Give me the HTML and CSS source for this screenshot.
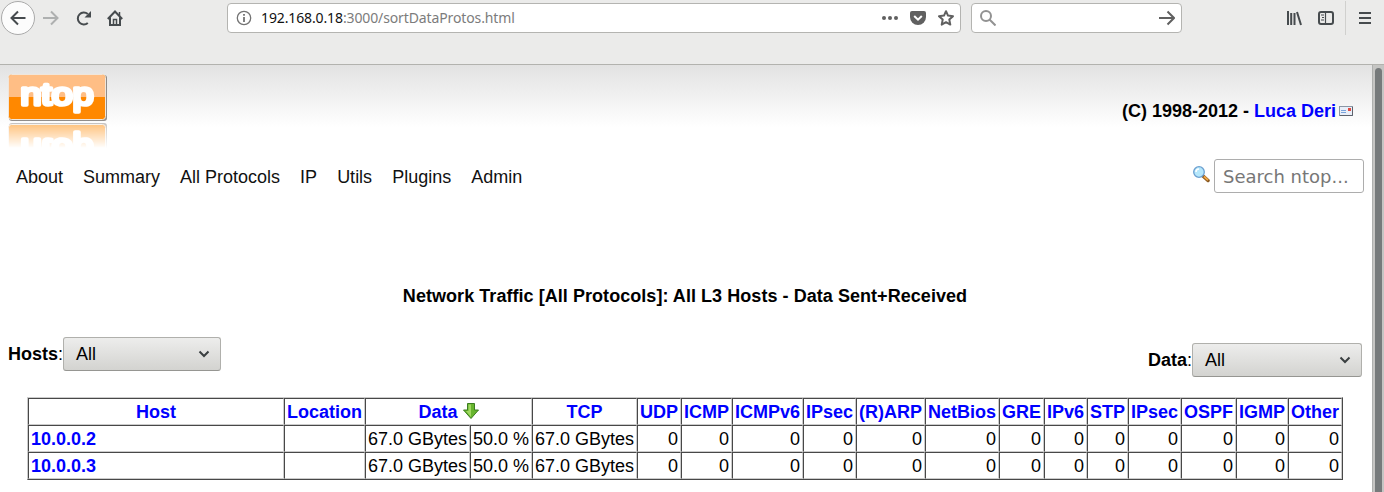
FILE: index.html
```
<!DOCTYPE html>
<html lang="en">
<head>
<meta charset="utf-8">
<title>ntop</title>
<link rel="stylesheet" href="styles.css">
</head>
<body>
<header class="toolbar">
  <div class="nav-buttons">
    <span class="back"><svg width="16" height="16" viewBox="0 0 16 16" class="icon"><path d="M15.500 8H2M8 1.500L1.500 8 8 14.500"/></svg></span>
    <svg width="16" height="16" viewBox="0 0 16 16" class="icon forward"><path d="M0 8h14M8 1.500L14.500 8 8 14.500"/></svg>
    <svg width="16" height="16" viewBox="0 0 16 16" class="icon"><path d="M11.800 13A6 6 0 1 1 11.800 4"/><path class="solid" d="M15 1v6.500H8.500z"/></svg>
    <svg width="16" height="16" viewBox="0 0 16 16" class="icon"><path d="M.8 9L8 1.500 15.200 9M3 7.500V15h10V7.500"/><path d="M6.500 15V9.500h3V15" stroke-width="1.500"/><path d="M12.500 2v4" stroke-width="1.500"/></svg>
  </div>
  <div class="url-bar">
    <svg width="16" height="16" viewBox="0 0 16 16" class="icon info"><circle cx="8" cy="8" r="6.700"/><path stroke-width="1.800" d="M8 7v5M8 4v1.800"/></svg>
    <span class="url"><b>192.168.0.18</b>:3000/sortDataProtos.html</span>
    <svg width="16" height="16" viewBox="0 0 16 16" class="dots"><circle cx="2" cy="8" r="2"/><circle cx="8" cy="8" r="2"/><circle cx="14" cy="8" r="2"/></svg>
    <svg width="16" height="16" viewBox="0 0 16 16" class="pocket"><path d="M2 1h12q2 0 2 2v4a8 8 0 0 1-16 0V3q0-2 2-2z"/><path class="check" d="M4.200 6L8 9.700 11.800 6"/></svg>
    <svg width="16" height="16" viewBox="0 0 16 16" class="icon gray"><path stroke-linejoin="round" d="M8 1.200l2 4.400 5 .6-3.700 3.400 1 5L8 12.200l-4.300 2.400 1-5L1 6.200l5-.6z"/></svg>
  </div>
  <div class="search-bar">
    <svg width="16" height="16" viewBox="0 0 16 16" class="icon lens"><circle cx="6" cy="6" r="5"/><path d="M9.500 9.500l6 6"/></svg>
    <svg width="16" height="16" viewBox="0 0 16 16" class="icon gray"><path d="M0 8h14.500M8.500 1.500L15 8l-6.500 6.500"/></svg>
  </div>
  <div class="tools">
    <svg width="16" height="16" viewBox="0 0 16 16" class="icon"><path d="M2 1v14M5.200 3v12M8.500 3v12M11 2l4 13"/></svg>
    <svg width="16" height="16" viewBox="0 0 16 16" class="icon"><rect x="1" y="2" width="14" height="12" rx="2"/><path stroke-width="1.200" d="M7.500 2v12M3 5h3M4 7.500h2M3 10h3"/></svg>
    <span class="divider"></span>
    <svg width="12" height="16" viewBox="0 0 12 16" class="icon"><path d="M0 3h12M0 8h12M0 13h12"/></svg>
  </div>
</header>
<div class="viewport">
<main class="page">
  <div class="masthead">
    <svg class="logo" width="110" height="57" viewBox="0 0 110 57">
      <rect x="9" y="10" width="98" height="46" rx="3" class="shadow"/>
      <rect x="8.500" y="9.500" width="97" height="45" rx="3" class="plate"/>
      <path class="top-half" d="M9 32V12q0-2 2-2h92q2 0 2 2v20z"/>
      <text x="20.500" y="40.300" textLength="73" lengthAdjust="spacingAndGlyphs" class="wordmark">ntop</text>
    </svg>
    <div class="copyright">(C) 1998-2012 - <a href="#">Luca Deri</a><svg width="14" height="10" viewBox="0 0 14 10"><rect x=".5" y=".5" width="13" height="9" fill="#e9eef8" stroke="#8996a5"/><path d="M1 9.500h12.500V1" fill="none" stroke="#5d626c"/><path d="M2 4.500h5M2 6.500h5" stroke="#79a4dc"/><path fill="#e14b40" d="M9 2h3v3H9z"/></svg></div>
  </div>
  <div class="menu-row">
    <nav class="menu"><span>About</span><span>Summary</span><span>All Protocols</span><span>IP</span><span>Utils</span><span>Plugins</span><span>Admin</span></nav>
    <div class="finder">
      <svg width="17" height="17" viewBox="0 0 17 17"><path d="M10 10l5 4.500" stroke="#8b5a21" stroke-width="3.500" stroke-linecap="round"/><path d="M11 10.500l4 3.700" stroke="#f2a743" stroke-width="1.800"/><circle cx="6" cy="6" r="5.300" fill="#b5e7fb" stroke="#6b9fd0" stroke-width="1.300"/><path d="M3 6q0-3 3-3" fill="none" stroke="#fff" stroke-width="1.500"/></svg>
      <input class="finder-input" type="text" placeholder="Search ntop...">
    </div>
  </div>
  <h1 class="title">Network Traffic [All Protocols]: All L3 Hosts - Data Sent+Received</h1>
  <div class="filters">
    <div class="filter"><b>Hosts</b>:<span class="select">All<svg width="12" height="8" viewBox="0 0 12 8"><path d="M1.500 1.500L6 6l4.500-4.500"/></svg></span></div>
    <div class="filter data"><b>Data</b>:<span class="select wide">All<svg width="12" height="8" viewBox="0 0 12 8"><path d="M1.500 1.500L6 6l4.500-4.500"/></svg></span></div>
  </div>
  <table class="traffic">
    <colgroup><col class="w256"><col class="w81"><col class="w105"><col class="w62"><col class="w105"><col class="w44"><col class="w51"><col class="w71"><col class="w53"><col class="w69"><col class="w74"><col class="w45"><col class="w43"><col class="w41"><col class="w53"><col class="w55"><col class="w52"><col class="w54"></colgroup>
    <tr><th>Host</th><th>Location</th><th colspan="2">Data <svg class="sort" width="16" height="16" viewBox="0 0 16 16"><path d="M4.500.5h7V7h4L8 15.500.5 7h4z" fill="#67b52d" stroke="#3b7d20"/><path d="M5.500 1.500h2.500V14L3 8h2.500z" fill="#a0d861"/></svg></th><th>TCP</th><th>UDP</th><th>ICMP</th><th>ICMPv6</th><th>IPsec</th><th>(R)ARP</th><th>NetBios</th><th>GRE</th><th>IPv6</th><th>STP</th><th>IPsec</th><th>OSPF</th><th>IGMP</th><th>Other</th></tr>
    <tr><th class="host">10.0.0.2</th><td></td><td>67.0 GBytes</td><td>50.0 %</td><td>67.0 GBytes</td><td>0</td><td>0</td><td>0</td><td>0</td><td>0</td><td>0</td><td>0</td><td>0</td><td>0</td><td>0</td><td>0</td><td>0</td><td>0</td></tr>
    <tr><th class="host">10.0.0.3</th><td></td><td>67.0 GBytes</td><td>50.0 %</td><td>67.0 GBytes</td><td>0</td><td>0</td><td>0</td><td>0</td><td>0</td><td>0</td><td>0</td><td>0</td><td>0</td><td>0</td><td>0</td><td>0</td><td>0</td></tr>
  </table>
</main>
<div class="scrollbar"><div class="thumb"></div></div>
</div>
</body>
</html>
```
FILE: styles.css
```
* { box-sizing: border-box; }
body { margin: 0; height: 492px; overflow: hidden; background: #fff; font: 18px/20px "Liberation Sans", Arial, sans-serif; color: #000; }
svg { display: block; flex: none; }
.toolbar { display: flex; height: 65px; padding: 3px 0 0 1px; background: #ebebea; border-bottom: 1px solid #b2b2ae; align-items: flex-start; }
.icon { fill: none; stroke: #464b4e; stroke-width: 2; }
.icon .solid { fill: #464b4e; stroke: none; }
.nav-buttons { display: flex; align-items: center; width: 226px; height: 30px; }
.nav-buttons > svg { margin-right: 15px; }
.back { display: flex; align-items: center; justify-content: center; width: 34px; height: 34px; margin-right: 8px; border: 1px solid #aaa; border-radius: 50%; background: #fcfcfc; }
.icon.forward { stroke: #aeb0b0; margin-right: 17px; }
.url-bar, .search-bar { display: flex; align-items: center; height: 30px; border: 1px solid #b4b4b1; border-radius: 4px; background: #fff; }
.url-bar { width: 734px; padding: 0 6px 0 8px; }
.search-bar { width: 211px; margin-left: 10px; padding: 0 6px 0 8px; justify-content: space-between; }
.icon.info { stroke: #737373; stroke-width: 1.3; }
.icon.gray { stroke: #606060; }
.icon.lens { stroke: #929292; }
.url { flex: 1; padding-left: 9px; font: 14px/20px "Noto Sans", sans-serif; letter-spacing: -0.12px; color: #7c7c7c; }
.url b { font-weight: 400; color: #111; }
.dots { fill: #606060; margin-right: 12px; }
.pocket { fill: #606060; margin-right: 12px; }
.pocket .check { fill: none; stroke: #fff; stroke-width: 2; }
.tools { display: flex; align-items: center; height: 30px; margin-left: 104px; }
.tools > svg:nth-child(2) { margin-left: 16px; }
.divider { width: 1px; height: 34px; margin: 0 13px 0 11px; background: #d0d0ce; }
.viewport { display: flex; height: 427px; }
.page { width: 1372px; height: 427px; background: linear-gradient(#e2e2e2, #fff 62px); }
.scrollbar { width: 12px; padding: 3px 2px 0 2px; background: #c5c5c3; border-left: 1px solid #aeb0ae; }
.thumb { width: 7px; height: 430px; border-radius: 4px 4px 0 0; background: #767a7b; }
.masthead { display: flex; justify-content: space-between; align-items: flex-start; height: 94px; padding-right: 19px; }
.logo { -webkit-box-reflect: below 0 linear-gradient(transparent 54%, rgba(0, 0, 0, .55)); }
.shadow { fill: #77726e; opacity: .8; }
.plate { fill: #ff8800; stroke: #f1e6da; }
.top-half { fill: #ffbe85; }
.wordmark { font: 400 31px "Liberation Sans", sans-serif; fill: #fff; stroke: #fff; stroke-width: 3.6; stroke-linejoin: round; }
.copyright { display: flex; align-items: center; height: 20px; margin-top: 36px; font-weight: 700; white-space: pre; }
.copyright a { color: #00f; text-decoration: none; margin-right: 3px; }
.menu-row { display: flex; justify-content: space-between; height: 34px; padding: 0 8px 0 16px; }
.menu { display: flex; gap: 20px; padding-top: 8px; color: #111; }
.finder { display: flex; gap: 4px; }
.finder > svg { margin-top: 7px; }
.finder-input { width: 150px; height: 34px; padding: 0 8px; border: 1px solid #adadad; border-radius: 3px; background: #fff; font: 18px "DejaVu Sans", sans-serif; }
.finder-input::placeholder { color: #777; }
.title { margin: 93px 0 0; height: 20px; padding-right: 2px; font-size: 18px; line-height: 20px; letter-spacing: 0.05px; text-align: center; }
.filters { display: flex; justify-content: space-between; height: 91px; padding: 31px 10px 0 8px; }
.filter { display: flex; height: 34px; align-items: center; }
.filter.data { margin-top: 6px; }
.select { display: flex; align-items: center; justify-content: space-between; width: 158px; height: 34px; padding: 0 10px 0 12px; border: 1px solid #b0b0ac; border-bottom-color: #969692; border-radius: 3px; background: linear-gradient(#ededec, #d3d3d0); }
.select.wide { width: 170px; }
.select svg { fill: none; stroke: #3a3f40; stroke-width: 2; }
.traffic { width: 1316px; margin-left: 27px; table-layout: fixed; border-collapse: separate; border-spacing: 0; border: 1px solid #484848; border-top-color: #ccc; border-left-color: #ccc; }
.traffic th, .traffic td { height: 27px; padding: 0 2px; border: 1px solid #484848; border-right-color: #ccc; border-bottom-color: #ccc; line-height: 20px; white-space: nowrap; text-align: right; background: #fff; }
.traffic th { color: #00f; text-align: center; }
.traffic .host { text-align: left; }
.sort { display: inline-block; vertical-align: -1px; }
.w256 { width: 256px; } .w81 { width: 81px; } .w105 { width: 105px; } .w62 { width: 62px; }
.w44 { width: 44px; } .w51 { width: 51px; } .w71 { width: 71px; } .w53 { width: 53px; }
.w69 { width: 69px; } .w74 { width: 74px; } .w45 { width: 45px; } .w43 { width: 43px; }
.w41 { width: 41px; } .w55 { width: 55px; } .w52 { width: 52px; } .w54 { width: 54px; }
```
